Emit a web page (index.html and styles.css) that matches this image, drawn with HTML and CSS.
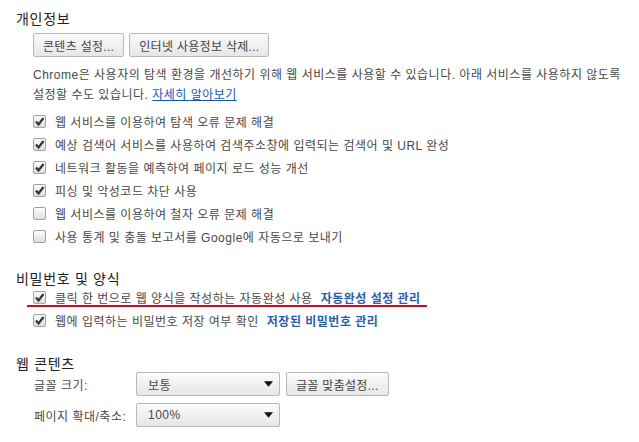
FILE: index.html
```html
<!DOCTYPE html>
<html lang="ko">
<head>
    <meta charset="UTF-8">
    <meta name="viewport" content="width=device-width, initial-scale=1.0">
    <title>설정</title>
    <link rel="stylesheet" href="styles.css">
</head>
<body>
    <main class="settings">
        <!-- 개인정보 -->
        <section class="group">
            <h3 class="group-title">개인정보</h3>
            <div class="group-body">
                <div class="button-row">
                    <button class="btn">콘텐츠 설정...</button>
                    <button class="btn">인터넷 사용정보 삭제...</button>
                </div>
                <p class="note">Chrome은 사용자의 탐색 환경을 개선하기 위해 웹 서비스를 사용할 수 있습니다. 아래 서비스를 사용하지 않도록 설정할 수도 있습니다. <a class="link" href="#">자세히 알아보기</a></p>
                <ul class="checks">
                    <li class="check-row"><span class="box checked"><svg viewBox="0 0 13 13"><path d="M3 6.5 L5.5 9.5 L10.5 3" /></svg></span>웹 서비스를 이용하여 탐색 오류 문제 해결</li>
                    <li class="check-row"><span class="box checked"><svg viewBox="0 0 13 13"><path d="M3 6.5 L5.5 9.5 L10.5 3" /></svg></span>예상 검색어 서비스를 사용하여 검색주소창에 입력되는 검색어 및 URL 완성</li>
                    <li class="check-row"><span class="box checked"><svg viewBox="0 0 13 13"><path d="M3 6.5 L5.5 9.5 L10.5 3" /></svg></span>네트워크 활동을 예측하여 페이지 로드 성능 개선</li>
                    <li class="check-row"><span class="box checked"><svg viewBox="0 0 13 13"><path d="M3 6.5 L5.5 9.5 L10.5 3" /></svg></span>피싱 및 악성코드 차단 사용</li>
                    <li class="check-row"><span class="box"></span>웹 서비스를 이용하여 철자 오류 문제 해결</li>
                    <li class="check-row"><span class="box"></span>사용 통계 및 충돌 보고서를 Google에 자동으로 보내기</li>
                </ul>
            </div>
        </section>

        <!-- 비밀번호 및 양식 -->
        <section class="group">
            <h3 class="group-title">비밀번호 및 양식</h3>
            <div class="group-body">
                <ul class="checks">
                    <li class="check-row marked"><span class="box checked"><svg viewBox="0 0 13 13"><path d="M3 6.5 L5.5 9.5 L10.5 3" /></svg></span>클릭 한 번으로 웹 양식을 작성하는 자동완성 사용<a class="action-link" href="#">자동완성 설정 관리</a></li>
                    <li class="check-row"><span class="box checked"><svg viewBox="0 0 13 13"><path d="M3 6.5 L5.5 9.5 L10.5 3" /></svg></span>웹에 입력하는 비밀번호 저장 여부 확인<a class="action-link" href="#">저장된 비밀번호 관리</a></li>
                </ul>
            </div>
        </section>

        <!-- 웹 콘텐츠 -->
        <section class="group">
            <h3 class="group-title">웹 콘텐츠</h3>
            <div class="group-body">
                <div class="field-row">
                    <span class="field-label">글꼴 크기:</span>
                    <div class="select"><span>보통</span><svg viewBox="0 0 8 5"><path d="M0 0 H8 L4 5 Z" /></svg></div>
                    <button class="btn">글꼴 맞춤설정...</button>
                </div>
                <div class="field-row">
                    <span class="field-label">페이지 확대/축소:</span>
                    <div class="select"><span>100%</span><svg viewBox="0 0 8 5"><path d="M0 0 H8 L4 5 Z" /></svg></div>
                </div>
            </div>
        </section>
    </main>
</body>
</html>
```

FILE: styles.css
```css
/* Page basics */
body {
    margin: 0;
    background-color: #fff;
    font-family: "Liberation Sans", "Noto Sans CJK KR", sans-serif;
    font-size: 12px;
    letter-spacing: 0.5px;
    color: #484848;
}

.settings {
    padding: 9px 0 0 16px;
}

/* Section headings */
.group-title {
    margin: 0;
    font-size: 14px;
    font-weight: normal;
    line-height: 20px;
    letter-spacing: 0.7px;
    color: #222;
}

.group + .group {
    margin-top: 21px;
}

.group:last-child {
    margin-top: 22px;
}

.group-body {
    padding-left: 17px;
}

/* Buttons */
.button-row {
    display: flex;
    gap: 5px;
    margin-top: 4px;
}

.btn {
    height: 24px;
    padding: 0 9px;
    font-family: inherit;
    font-size: 12px;
    letter-spacing: 0.3px;
    color: #444;
    background: linear-gradient(#fbfbfb, #e6e6e6);
    border: 1px solid #b8b8b8;
    border-radius: 2px;
    cursor: pointer;
}

/* Description text */
.note {
    margin: 8px 0 0;
    width: 600px;
    line-height: 20px;
}

.link {
    color: #15c;
}

/* Checkbox lists */
.checks {
    list-style: none;
    margin: 5px 0 0;
    padding: 0;
}

.group + .group .checks {
    margin-top: -3px;
}

.check-row {
    display: flex;
    align-items: center;
    height: 23px;
    position: relative;
}

.box {
    box-sizing: border-box;
    width: 13px;
    height: 13px;
    margin-right: 9px;
    border: 1px solid #a0a0a0;
    border-radius: 2px;
    background: linear-gradient(#fdfdfd, #dedede);
    flex-shrink: 0;
}

.box svg {
    display: block;
    width: 13px;
    height: 13px;
    margin: -1px;
}

.box svg path {
    fill: none;
    stroke: #333;
    stroke-width: 2.2;
}

.action-link {
    margin-left: 8px;
    font-weight: bold;
    color: #2a5db0;
    text-decoration: none;
}

/* Red annotation line under the autofill row */
.marked::after {
    content: "";
    position: absolute;
    left: -6px;
    top: 19px;
    width: 400px;
    height: 2px;
    background-color: #e3001b;
}

/* Font / zoom rows */
.field-row {
    display: flex;
    align-items: center;
    gap: 6px;
    margin-top: -2px;
}

.field-row + .field-row {
    margin-top: 7px;
}

.field-label {
    width: 96px;
    padding-left: 1px;
}

.select {
    box-sizing: border-box;
    display: flex;
    align-items: center;
    justify-content: space-between;
    width: 144px;
    height: 24px;
    padding: 0 6px 0 11px;
    background: linear-gradient(#fbfbfb, #e6e6e6);
    border: 1px solid #b8b8b8;
    border-radius: 2px;
}

.select svg {
    width: 9px;
    height: 6px;
}

.select svg path {
    fill: #111;
}
```
